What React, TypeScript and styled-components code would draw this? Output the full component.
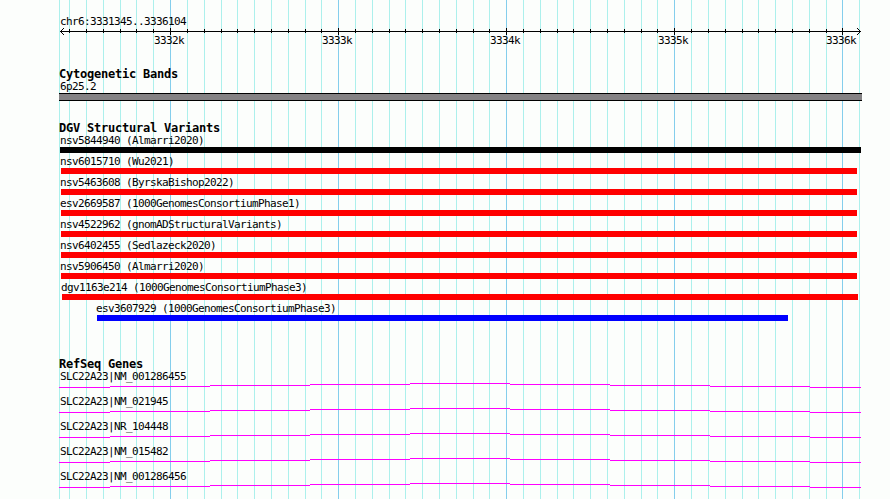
import React from "react";
import styled, { createGlobalStyle } from "styled-components";

const GlobalStyle = createGlobalStyle`
  body {
    margin: 0;
    background: #fcfefc;
    overflow: hidden;
  }
`;

const Browser = styled.main`
  position: relative;
  width: 890px;
  height: 499px;
  overflow: hidden;
  color: #000;
  background: #fcfefc;
  font-family: "DejaVu Sans Mono", "Liberation Mono", monospace;
`;

const Grid = styled.svg`
  position: absolute;
  inset: 0;
  display: block;
`;

const Panel = styled.div`
  position: relative;
  width: 803px;
  padding: 15px 0 0 59px;
`;

const Label = styled.div<{ $indent?: number }>`
  height: 13px;
  padding-left: ${({ $indent = 1 }) => $indent}px;
  font-size: 11px;
  line-height: 13px;
  letter-spacing: -0.622px;
  white-space: pre;
`;

const Title = styled.h2`
  margin: 0;
  height: 12px;
  font-size: 12px;
  font-weight: bold;
  line-height: 12px;
  letter-spacing: -0.224px;
  white-space: pre;
`;

const Ruler = styled.header`
  height: 53px;
`;

const Axis = styled.svg`
  display: block;
`;

const Scale = styled.div`
  display: flex;
  gap: 138px;
  margin-top: -1px;
  padding-left: 95px;

  ${Label} {
    flex: none;
    width: 30px;
    padding-left: 0;
  }
`;

const Track = styled.section<{ $height: number }>`
  height: ${({ $height }) => $height}px;
`;

const Band = styled.div`
  box-sizing: border-box;
  height: 8px;
  border: solid #000;
  border-width: 1px 0;
  background: #848284;
`;

const Variant = styled.div`
  height: 21px;
`;

const Bar = styled.div<{ $start: number; $width: number; $color: string }>`
  width: ${({ $width }) => $width}px;
  height: 6px;
  margin-left: ${({ $start }) => $start}px;
  background: ${({ $color }) => $color};
`;

const Gene = styled.div`
  height: 25px;
`;

const Intron = styled.svg`
  display: block;
`;

const MINOR_LINES = [
  59, 69, 86, 103, 120, 136, 153, 187, 204, 221, 237, 254, 271, 288, 305, 321,
  355, 372, 389, 405, 422, 439, 456, 473, 489, 523, 540, 557, 573, 590, 607,
  624, 641, 657, 691, 708, 725, 742, 758, 775, 792, 809, 826, 859,
];
const MAJOR_LINES = [170, 338, 506, 674, 842];

const positions = ["3332k", "3333k", "3334k", "3335k", "3336k"];

const variants = [
  { name: "nsv5844940 (Almarri2020)", start: 1, width: 801, color: "#000" },
  { name: "nsv6015710 (Wu2021)", start: 2, width: 796, color: "#f00" },
  { name: "nsv5463608 (ByrskaBishop2022)", start: 2, width: 796, color: "#f00" },
  { name: "esv2669587 (1000GenomesConsortiumPhase1)", start: 2, width: 796, color: "#f00" },
  { name: "nsv4522962 (gnomADStructuralVariants)", start: 2, width: 796, color: "#f00" },
  { name: "nsv6402455 (Sedlazeck2020)", start: 2, width: 796, color: "#f00" },
  { name: "nsv5906450 (Almarri2020)", start: 2, width: 796, color: "#f00" },
  { name: "dgv1163e214 (1000GenomesConsortiumPhase3)", start: 3, width: 796, color: "#f00" },
  { name: "esv3607929 (1000GenomesConsortiumPhase3)", start: 38, width: 691, color: "#00f" },
];

const genes = ["NM_001286455", "NM_021945", "NR_104448", "NM_015482", "NM_001286456"];

// x, width and y of every step in an intron line
const steps = [
  [0, 51, 4],
  [51, 100, 3],
  [151, 100, 2],
  [251, 100, 1],
  [351, 100, 0],
  [451, 100, 1],
  [551, 100, 2],
  [651, 100, 3],
  [751, 51, 4],
];

function GridLines() {
  return (
    <Grid width="890" height="499" shapeRendering="crispEdges">
      {MINOR_LINES.map((x) => (
        <rect key={x} x={x} width="1" height="499" fill="#acf0ec" />
      ))}
      {MAJOR_LINES.map((x) => (
        <rect key={x} x={x} width="1" height="499" fill="#84ceec" />
      ))}
    </Grid>
  );
}

function AxisLine() {
  return (
    <Axis width="803" height="7" shapeRendering="crispEdges">
      <rect x="1" y="3" width="801" height="1" />
      {[1, 2, 3].map((d) => (
        <React.Fragment key={d}>
          <rect x={1 + d} y={3 - d} width="1" height="1" />
          <rect x={1 + d} y={3 + d} width="1" height="1" />
          <rect x={801 - d} y={3 - d} width="1" height="1" />
          <rect x={801 - d} y={3 + d} width="1" height="1" />
        </React.Fragment>
      ))}
      {MINOR_LINES.slice(1, -1).map((x) => (
        <rect key={x} x={x - 59} y="1" width="1" height="4" />
      ))}
      {MAJOR_LINES.map((x) => (
        <rect key={x} x={x - 59} y="0" width="1" height="7" />
      ))}
    </Axis>
  );
}

export default function App() {
  return (
    <>
      <GlobalStyle />
      <Browser>
        <GridLines />
        <Panel>
          <Ruler>
            <Label>chr6:3331345..3336104</Label>
            <AxisLine />
            <Scale>
              {positions.map((position) => (
                <Label key={position}>{position}</Label>
              ))}
            </Scale>
          </Ruler>
          <Track $height={54}>
            <Title>Cytogenetic Bands</Title>
            <Label>6p25.2</Label>
            <Band />
          </Track>
          <Track $height={236}>
            <Title>DGV Structural Variants</Title>
            {variants.map(({ name, start, width, color }) => (
              <Variant key={name}>
                <Label $indent={start < 3 ? 1 : start - 1}>{name}</Label>
                <Bar $start={start} $width={width} $color={color} />
              </Variant>
            ))}
          </Track>
          <Track $height={141}>
            <Title>RefSeq Genes</Title>
            {genes.map((gene) => (
              <Gene key={gene}>
                <Label>SLC22A23|{gene}</Label>
                <Intron width="803" height="5" shapeRendering="crispEdges">
                  {steps.map(([x, width, y]) => (
                    <rect key={x} x={x} y={y} width={width} height="1" fill="#f0f" />
                  ))}
                </Intron>
              </Gene>
            ))}
          </Track>
        </Panel>
      </Browser>
    </>
  );
}
